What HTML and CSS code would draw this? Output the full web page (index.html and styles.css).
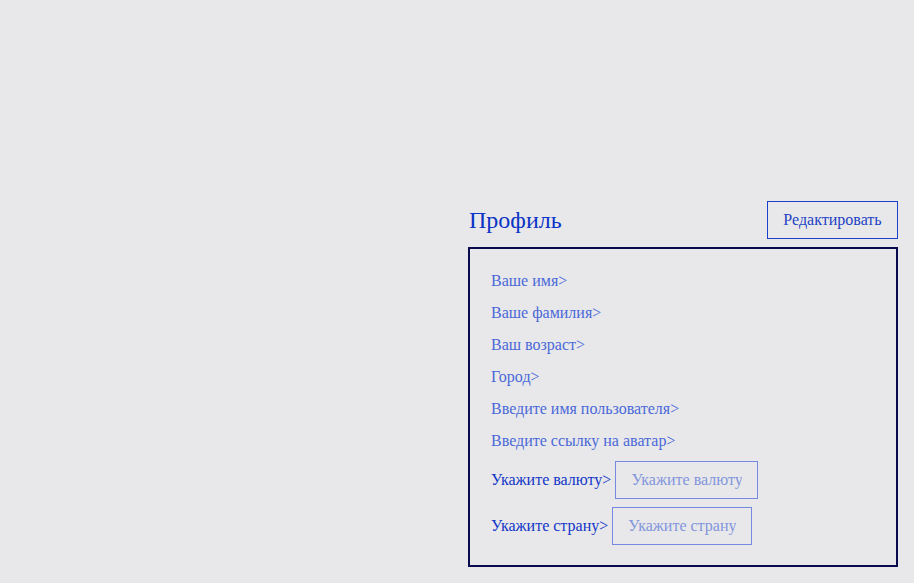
FILE: index.html
```html
<!DOCTYPE html>
<html lang="ru">
<head>
<meta charset="utf-8">
<title>Профиль</title>
<link rel="stylesheet" href="styles.css">
</head>
<body>
<div class="page">
  <section class="profile">
    <header class="profile-head">
      <h1 class="title">Профиль</h1>
      <button class="edit-btn" type="button">Редактировать</button>
    </header>
    <div class="card">
      <div class="field">Ваше имя&gt;</div>
      <div class="field">Ваше фамилия&gt;</div>
      <div class="field">Ваш возраст&gt;</div>
      <div class="field">Город&gt;</div>
      <div class="field">Введите имя пользователя&gt;</div>
      <div class="field">Введите ссылку на аватар&gt;</div>
      <div class="input-row first">
        <label class="label" for="cur">Укажите валюту&gt;</label>
        <input class="inp inp-cur" id="cur" type="text" placeholder="Укажите валюту">
      </div>
      <div class="input-row">
        <label class="label" for="cnt">Укажите страну&gt;</label>
        <input class="inp inp-cnt" id="cnt" type="text" placeholder="Укажите страну">
      </div>
    </div>
  </section>
</div>
</body>
</html>
```

FILE: styles.css
```css
html, body {
  margin: 0;
  padding: 0;
  background: #e8e8ea;
  font-family: "Liberation Serif", "Times New Roman", serif;
}

.page {
  display: flex;
  justify-content: flex-end;
  padding: 201px 16px 0 0;
  height: 583px;
  box-sizing: border-box;
}

.profile {
  width: 430px;
}

.profile-head {
  display: flex;
  justify-content: space-between;
  align-items: center;
  height: 38px;
  margin-bottom: 8px;
}

.title {
  margin: 0 0 0 1px;
  font-size: 24px;
  font-weight: normal;
  color: #0b34c6;
}

.edit-btn {
  height: 38px;
  width: 131px;
  box-sizing: border-box;
  border: 1px solid #1a40cc;
  background: transparent;
  font-family: inherit;
  font-size: 16px;
  color: #1c42c4;
  padding: 0;
}

.card {
  border: 2px solid #0a0a4e;
  padding: 16px 20px 20px 21px;
  box-sizing: border-box;
  width: 430px;
}

.field {
  font-size: 16px;
  line-height: 32px;
  color: #4a68d8;
}

.input-row {
  display: flex;
  align-items: center;
  gap: 4px;
  margin-top: 8px;
}

.input-row.first {
  margin-top: 4px;
}

.label {
  font-size: 16px;
  color: #1236c8;
}

.inp {
  height: 38px;
  box-sizing: border-box;
  border: 1px solid #7589e0;
  background: transparent;
  font-family: inherit;
  font-size: 16px;
  padding: 0 15px;
  color: #1236c8;
  outline: none;
}

.inp::placeholder {
  color: #8295dc;
  opacity: 1;
}

.inp-cur {
  width: 143px;
}

.inp-cnt {
  width: 140px;
}
```
